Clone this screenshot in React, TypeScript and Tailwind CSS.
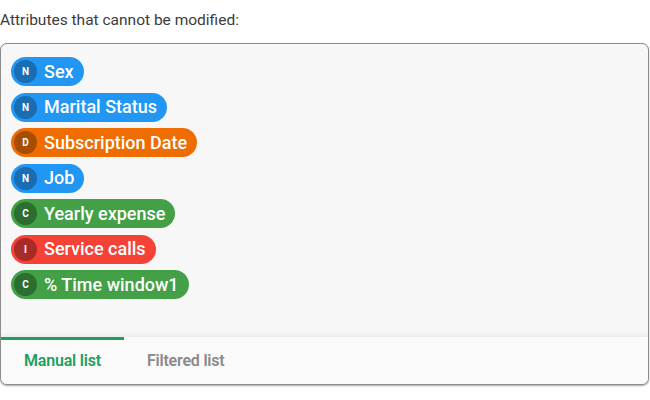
import React, { useState } from "react";

type Attr = { label: string; kind: "N" | "D" | "C" | "I" };

const attrs: Attr[] = [
  { label: "Sex", kind: "N" },
  { label: "Marital Status", kind: "N" },
  { label: "Subscription Date", kind: "D" },
  { label: "Job", kind: "N" },
  { label: "Yearly expense", kind: "C" },
  { label: "Service calls", kind: "I" },
  { label: "% Time window1", kind: "C" },
];

// chip colours per attribute kind
const styles: Record<Attr["kind"], { chip: string; badge: string }> = {
  N: { chip: "bg-[#2196f3]", badge: "bg-[#1a6cb3]" },
  D: { chip: "bg-[#ef6c00]", badge: "bg-[#a84c00]" },
  C: { chip: "bg-[#43a047]", badge: "bg-[#2b6e2f]" },
  I: { chip: "bg-[#f44336]", badge: "bg-[#aa2a25]" },
};

function Chip({ attr }: { attr: Attr }) {
  const s = styles[attr.kind];
  return (
    <div className={`flex items-center h-[29px] rounded-full pl-[3px] pr-[10px] gap-[7px] text-white ${s.chip}`}>
      <span className={`w-[23px] h-[23px] rounded-full flex items-center justify-center text-[10px] font-bold ${s.badge}`}>
        {attr.kind}
      </span>
      <span className="text-[18px] font-medium leading-none">{attr.label}</span>
    </div>
  );
}

export default function App() {
  const [tab, setTab] = useState(0);
  const tabs = ["Manual list", "Filtered list"];

  return (
    <div className="w-[650px] h-[400px] bg-white font-['Roboto',sans-serif] overflow-hidden">
      <div className="pt-[11px] text-[15.5px] text-[#3c3c3c] leading-[18px]">Attributes that cannot be modified:</div>

      <div className="mt-[14px] w-[649px] h-[342px] border border-[#8c8c8c] rounded-[7px] bg-[#f7f7f7] flex flex-col overflow-hidden shadow-[0_1px_2px_rgba(0,0,0,0.35)]">
        <div className="flex-1 pl-[10px] pt-[13px] flex flex-col items-start gap-[6.5px]">
          {attrs.map((a) => (
            <Chip key={a.label} attr={a} />
          ))}
        </div>

        <div className="h-[47px] bg-[#fafafa] flex shadow-[0_-2px_5px_rgba(0,0,0,0.06)]">
          {tabs.map((t, i) => (
            <button
              key={t}
              onClick={() => setTab(i)}
              className={`relative h-full px-[23px] flex items-center justify-center text-[16px] font-semibold tracking-[-0.2px] ${
                tab === i ? "text-[#1e9e62]" : "text-[#8a8a8a]"
              }`}
            >
              {tab === i && <span className="absolute left-0 top-0 w-full h-[3px] bg-[#1e9e62]" />}
              {t}
            </button>
          ))}
        </div>
      </div>
    </div>
  );
}
